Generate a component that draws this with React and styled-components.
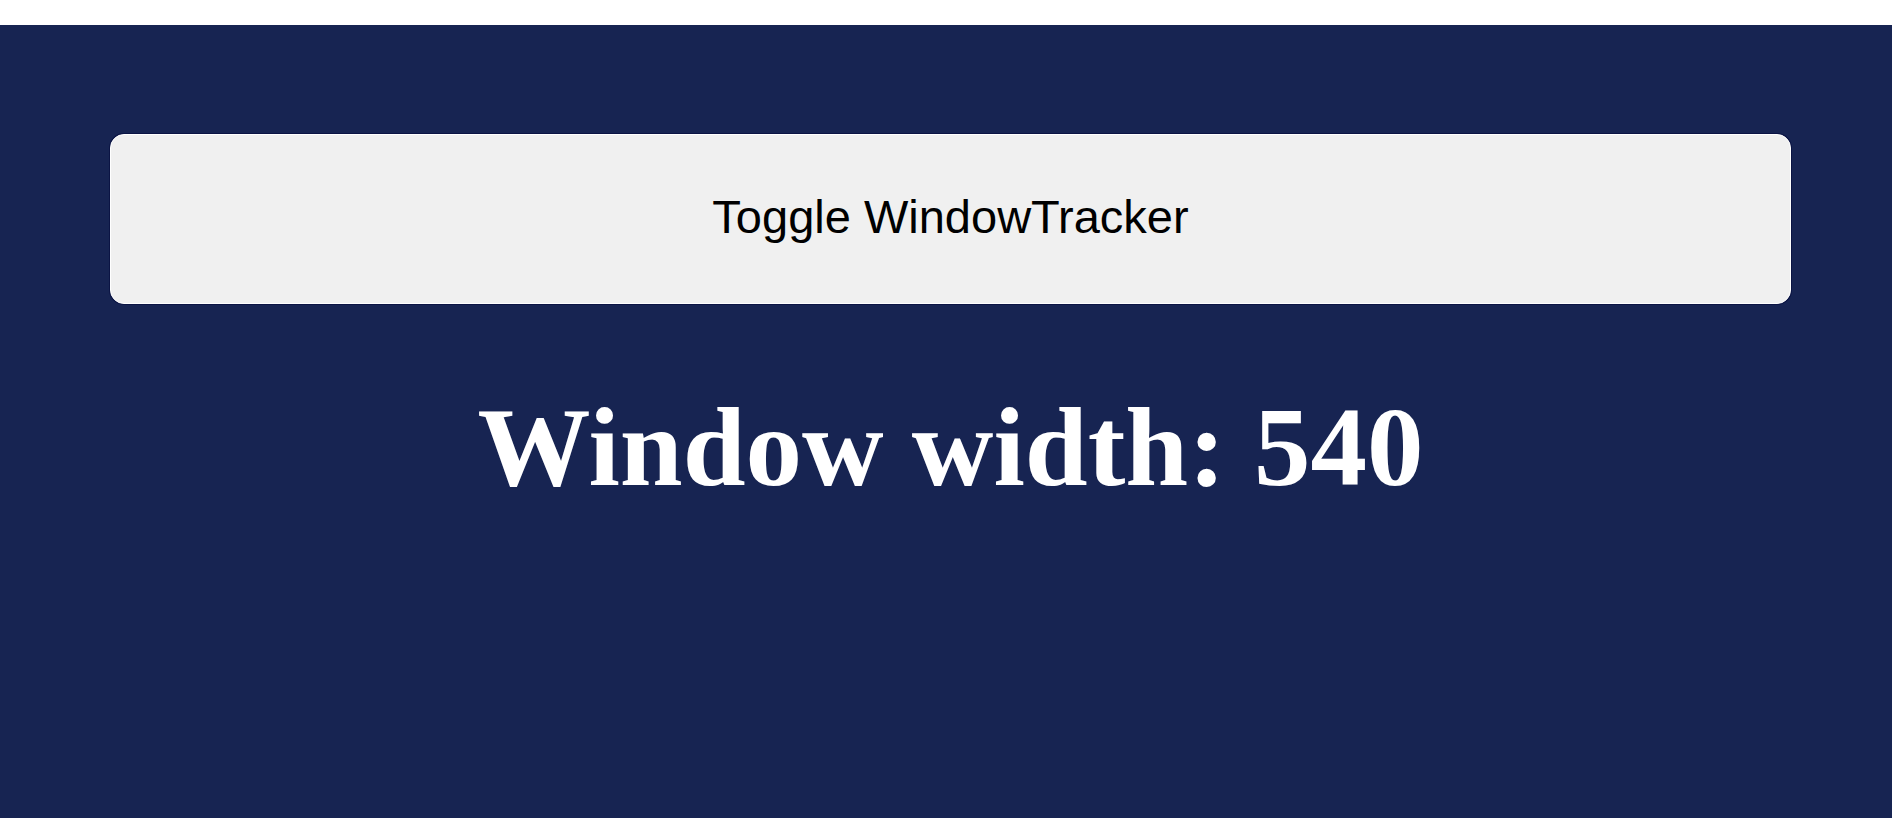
import React from "react";
import styled, { createGlobalStyle } from "styled-components";

const Global = createGlobalStyle`
  html, body { margin: 0; padding: 0; background: #ffffff; }
  body { font-family: "Liberation Sans", Arial, sans-serif; }
`;

const TopStrip = styled.div`
  height: 25px;
  background: #ffffff;
`;

const Stage = styled.main`
  min-height: 793px;
  background: #172452;
  box-sizing: border-box;
  padding: 109px 101px 0 110px;
  display: flex;
  flex-direction: column;
  align-items: stretch;
`;

const ToggleButton = styled.button`
  height: 170px;
  box-sizing: border-box;
  background: #f0f0f0;
  border: 1px solid #ffffff;
  box-shadow: 0 0 0 1px #0b1444;
  border-radius: 14px;
  font-family: "Liberation Sans", Arial, sans-serif;
  font-size: 47px;
  color: #000000;
  cursor: pointer;
  padding: 0 0 5px;
`;

const Heading = styled.h1`
  margin: 86px 0 0;
  text-align: center;
  font-family: "Liberation Serif", "Times New Roman", serif;
  font-weight: 700;
  font-size: 113px;
  line-height: 1;
  color: #ffffff;
`;

export default function App() {
  return (
    <>
      <Global />
      <TopStrip />
      <Stage>
        <ToggleButton>Toggle WindowTracker</ToggleButton>
        <Heading>Window width: 540</Heading>
      </Stage>
    </>
  );
}
